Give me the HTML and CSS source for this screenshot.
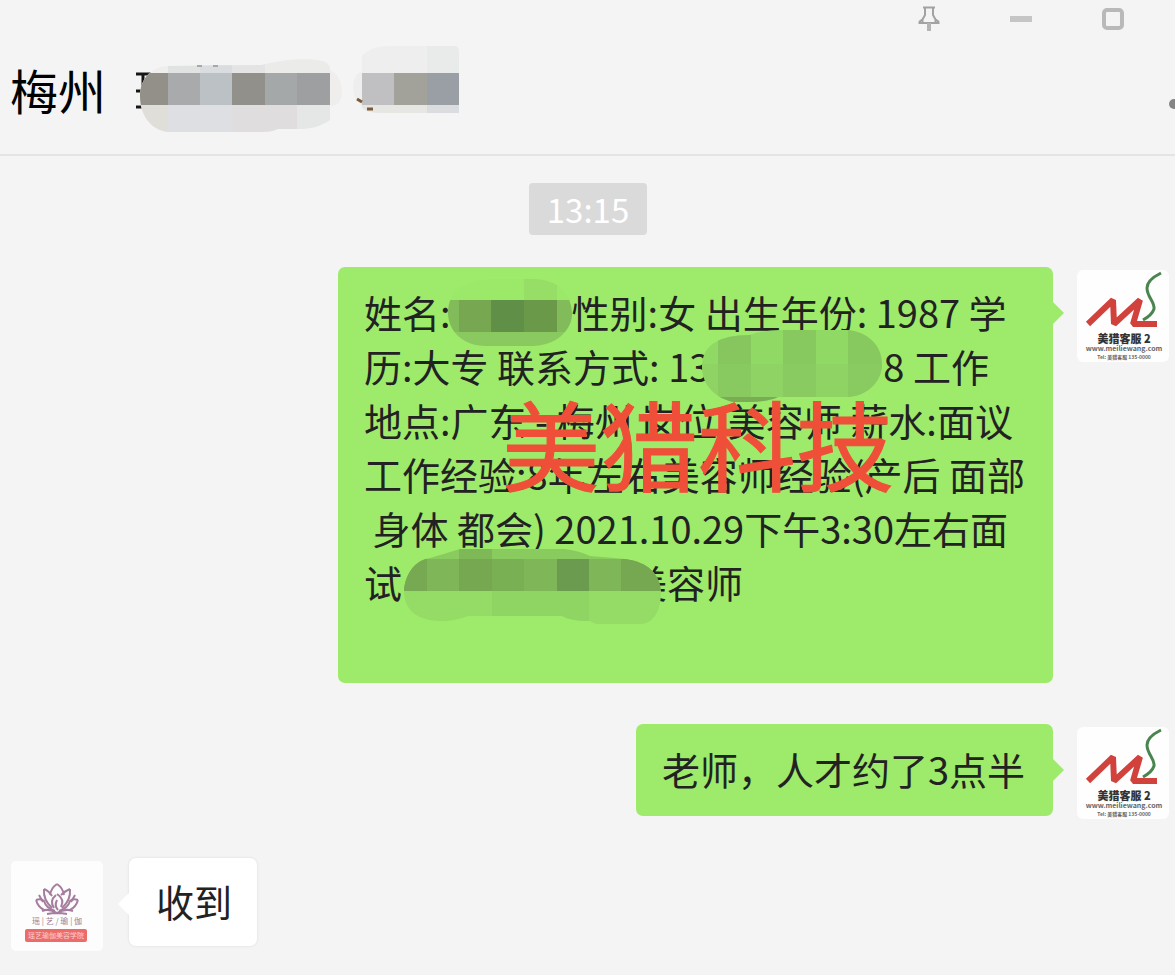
FILE: index.html
```
<!DOCTYPE html>
<html lang="zh-CN">
<head>
    <meta charset="UTF-8">
    <meta name="viewport" content="width=device-width, initial-scale=1.0">
    <title>梅州</title>
    <link rel="stylesheet" href="styles.css">
</head>
<body>
    <header class="chat-header">
        <div class="window-controls">
            <button type="button" aria-label="置顶">
                <svg width="24" height="28" viewBox="0 0 24 28" fill="none" stroke="#a2a2a2" stroke-width="2">
                    <path d="M6 2.500H18M8 3V10L5.500 14.500V17M16 3V10L18.500 14.500V17M1.500 18H22.500M2 17L6 14M22 17L18 14" />
                    <path d="M12 18V26" stroke="#b4b4b4" stroke-width="4" />
                </svg>
            </button>
            <button type="button" aria-label="最小化">
                <svg width="24" height="28" viewBox="0 0 24 28"><path d="M1 14H23" stroke="#c5c5c5" stroke-width="6" /></svg>
            </button>
            <button type="button" aria-label="最大化">
                <svg width="24" height="28" viewBox="0 0 24 28"><rect x="3" y="5" width="18" height="18" rx="3" fill="none" stroke="#b9b9b9" stroke-width="4" /></svg>
            </button>
        </div>
        <div class="title-row">
            <h1>梅州</h1>
            <svg class="title-mask" width="330" height="94" viewBox="134 44 330 94">
                <defs>
                    <clipPath id="nameClip"><path d="M140 96C140 80 150 68 166 66L262 65C280 60 305 58 322 61Q330 63 330 70Q342 76 342 94Q341 106 330 106V120C320 127 310 129 298 129H278Q272 132 262 132H168C150 130 140 114 140 96Z" /></clipPath>
                    <clipPath id="groupClip"><path d="M362 56Q370 46 390 46H454Q459 46 459 52V113H378Q362 112 360 104Q353 98 353 87Q354 73 362 72Z" /></clipPath>
                </defs>
                <path d="M136 74H154M136 91H143M136 107H143M143 75V107" stroke="#161616" stroke-width="3" />
                <g clip-path="url(#nameClip)">
                    <rect x="140" y="55" width="204" height="80" fill="#efeeec" />
                    <path d="M168 55H232V73H168Z" fill="#e1e2e2" />
                    <path d="M200 55H232V73H200Z" fill="#d9dde0" />
                    <path d="M232 55H265V73H232Z" fill="#e4e4e4" />
                    <path d="M265 55H330V73H265Z" fill="#ebebea" />
                    <path d="M140 105H168V135H140Z" fill="#dfded9" />
                    <path d="M168 105H232V135H168Z" fill="#dddfe2" />
                    <path d="M232 105H297V135H232Z" fill="#dfdddd" />
                    <path d="M297 105H330V135H297Z" fill="#e5e7e6" />
                    <path d="M140 73H168V105H140Z" fill="#929089" />
                    <path d="M168 73H200V105H168Z" fill="#a9aaac" />
                    <path d="M200 73H232V105H200Z" fill="#bcc1c6" />
                    <path d="M232 73H265V105H232Z" fill="#92908b" />
                    <path d="M265 73H297V105H265Z" fill="#a5a8a8" />
                    <path d="M297 73H330V105H297Z" fill="#9d9fa1" />
                </g>
                <g clip-path="url(#groupClip)">
                    <rect x="350" y="44" width="112" height="72" fill="#efeeee" />
                    <path d="M427 44H460V73H427Z" fill="#e9eaea" />
                    <path d="M362 105H427V115H362Z" fill="#e6e6e3" />
                    <path d="M427 105H460V115H427Z" fill="#dadcdf" />
                    <path d="M362 73H394V105H362Z" fill="#c0c0c2" />
                    <path d="M394 73H427V105H394Z" fill="#a2a19a" />
                    <path d="M427 73H459V105H427Z" fill="#999fa4" />
                </g>
                <path d="M197 66H202M213 66H218" stroke="#a9a9a4" stroke-width="2" />
                <path d="M357 99L362 102M367 109H373" stroke="#7a5a3a" stroke-width="3" />
            </svg>
            <button type="button" class="more" aria-label="更多">
                <svg width="6" height="94" viewBox="0 0 6 94"><circle cx="5" cy="60" r="5" fill="#858585" /></svg>
            </button>
        </div>
    </header>

    <main class="chat">
        <time class="chat-time">13:15</time>

        <div class="message message-own">
            <div class="bubble">
                <span class="line">姓名:<span class="mask mask-name"><svg width="124" height="68" viewBox="448 278 124 68">
                    <defs><clipPath id="maskName"><path d="M448 313C448 290 466 279 495 279H532C558 279 572 294 572 315C571 332 554 346 532 346H486C462 346 448 330 448 313Z" /></clipPath></defs>
                    <g clip-path="url(#maskName)">
                        <rect x="448" y="278" width="124" height="22" fill="#9ce869" />
                        <rect x="524" y="278" width="33" height="22" fill="#97de66" />
                        <rect x="448" y="300" width="124" height="32" fill="#82bb5a" />
                        <rect x="459" y="300" width="32" height="32" fill="#77a851" />
                        <rect x="491" y="300" width="33" height="32" fill="#608f48" />
                        <rect x="524" y="300" width="33" height="32" fill="#6b994a" />
                        <rect x="448" y="332" width="124" height="14" fill="#89c95f" />
                    </g></svg></span>性别:女 出生年份: 1987 学</span>
                <span class="line">历:大专 联系方式: 13<span class="mask mask-phone"><svg width="180" height="74" viewBox="702 329 180 74">
                    <defs><clipPath id="maskPhone"><path d="M702 366C702 346 718 335 750 335Q764 330 780 330H846C868 331 882 346 882 364C882 382 866 397 846 397H778Q768 402 748 402H734C714 398 702 384 702 366Z" /></clipPath></defs>
                    <g clip-path="url(#maskPhone)">
                        <rect x="702" y="329" width="180" height="74" fill="#91d965" />
                        <rect x="718" y="329" width="33" height="74" fill="#87c65e" />
                        <rect x="783" y="329" width="33" height="74" fill="#87c95e" />
                        <rect x="848" y="329" width="34" height="74" fill="#87c95e" />
                        <rect x="702" y="364" width="180" height="33" fill="#8bce61" fill-opacity="0.500" />
                        <rect x="702" y="397" width="80" height="6" fill="#78ad53" />
                    </g></svg></span>8 工作</span>
                <span class="line">地点:广东 - 梅州 岗位:美容师 薪水:面议</span>
                <span class="line">工作经验:8年左右美容师经验(产后 面部</span>
                <span class="line"> 身体 都会) 2021.10.29下午3:30左右面</span>
                <span class="line">试<span class="mask mask-place"><svg width="257" height="76" viewBox="404 549 257 76">
                    <defs><clipPath id="maskPlace"><path d="M404 590C406 572 416 560 430 558Q444 554 460 549H565Q580 551 590 556L625 559C648 562 660 574 661 592C661 610 654 624 640 624H596L590 621Q570 621 562 616H468Q456 621 440 621C416 620 404 610 404 590Z" /></clipPath></defs>
                    <g clip-path="url(#maskPlace)">
                        <rect x="404" y="549" width="257" height="10" fill="#8acb60" />
                        <rect x="459" y="549" width="33" height="10" fill="#7fb957" />
                        <rect x="404" y="559" width="257" height="32" fill="#7fb758" />
                        <rect x="404" y="559" width="23" height="32" fill="#76a952" />
                        <rect x="459" y="559" width="33" height="32" fill="#76a852" />
                        <rect x="492" y="559" width="32" height="32" fill="#79b054" />
                        <rect x="557" y="559" width="32" height="32" fill="#6b9b4e" />
                        <rect x="621" y="559" width="40" height="32" fill="#76a852" />
                        <rect x="404" y="591" width="257" height="34" fill="#94dc66" />
                        <rect x="492" y="591" width="97" height="34" fill="#8fd563" />
                    </g></svg></span>美容师</span>
                <span class="line"> </span>
                <span class="watermark">美猎科技</span>
            </div>
            <svg class="avatar" viewBox="0 0 92 92" role="img" aria-label="美猎客服2">
                <rect width="92" height="92" rx="6" fill="#fefefe" />
                <path d="M11 54L36 30L37 54L63 30L56 54H80" fill="none" stroke="#d2423d" stroke-width="6" stroke-linejoin="bevel" />
                <path d="M84 3Q70 10 70 18C70 27 78 32 77 39Q75 45 66 50" fill="none" stroke="#4a8550" stroke-width="3" />
                <text class="logo-name" x="47" y="73">美猎客服 2</text>
                <text class="logo-small" x="47" y="81">www.meiliewang.com</text>
                <text class="logo-tiny" x="47" y="89">Tel: 美猎客服 135-0000</text>
            </svg>
        </div>

        <div class="message message-own">
            <div class="bubble">
                <span class="line">老师，人才约了3点半</span>
            </div>
            <svg class="avatar" viewBox="0 0 92 92" role="img" aria-label="美猎客服2">
                <rect width="92" height="92" rx="6" fill="#fefefe" />
                <path d="M11 54L36 30L37 54L63 30L56 54H80" fill="none" stroke="#d2423d" stroke-width="6" stroke-linejoin="bevel" />
                <path d="M84 3Q70 10 70 18C70 27 78 32 77 39Q75 45 66 50" fill="none" stroke="#4a8550" stroke-width="3" />
                <text class="logo-name" x="47" y="73">美猎客服 2</text>
                <text class="logo-small" x="47" y="81">www.meiliewang.com</text>
                <text class="logo-tiny" x="47" y="89">Tel: 美猎客服 135-0000</text>
            </svg>
        </div>

        <div class="message message-other">
            <svg class="avatar" viewBox="0 0 92 90" role="img" aria-label="美容院">
                <rect width="92" height="90" rx="5" fill="#fdfdfd" />
                <g fill="none" stroke="#a57d9e" stroke-width="2">
                    <path d="M46 23Q40 27 39 34M46 23Q52 27 53 34M33 28Q32 39 41 47M33 28Q38 30 41 35M59 28Q60 39 51 47M59 28Q54 30 50 34" />
                    <path d="M25 39Q30 37 33 40Q35 47 44 50M25 39Q27 46 33 49M67 39Q62 37 59 40Q57 47 48 50M67 39Q65 46 59 49" />
                    <path d="M45 34Q38 40 43 47M46 33Q54 38 50 46M46 39Q43 45 47 49M31 50Q38 47 46 52Q54 47 62 50M36 53Q46 51 56 53M28 34L32 41M64 34L60 41" />
                </g>
                <text class="lotus-name" x="46" y="63">瑶 | 艺 / 瑜 | 伽</text>
                <rect x="14" y="68" width="62" height="13" rx="2" fill="#ed6b69" />
                <text class="lotus-label" x="45" y="77">瑶艺瑜伽美容学院</text>
            </svg>
            <div class="bubble">
                <span class="line">收到</span>
            </div>
        </div>
    </main>
</body>
</html>
```
FILE: styles.css
```
body {
    margin: 0;
    background-color: #f4f4f4;
    color: #222;
    font-family: "Noto Sans CJK SC", sans-serif;
    overflow-x: hidden;
}

button {
    padding: 0;
    border: none;
    background: none;
    cursor: pointer;
}

svg {
    display: block;
}

.chat-header {
    border-bottom: 2px solid #e4e4e4;
    padding-bottom: 16px;
}

.window-controls {
    display: flex;
    justify-content: flex-end;
    align-items: center;
    gap: 68px;
    height: 38px;
    padding-right: 50px;
}

.title-row {
    display: flex;
    align-items: flex-start;
    margin-top: 6px;
    padding-left: 10px;
}

.title-row h1 {
    margin: 0;
    color: #000;
    font-size: 48px;
    font-weight: 400;
    line-height: 90px;
}

.title-mask {
    margin-left: 28px;
}

.more {
    margin-left: auto;
}

.chat {
    display: flex;
    flex-direction: column;
    gap: 41px;
    padding: 27px 6px 24px 11px;
}

.chat-time {
    align-self: center;
    margin-right: 4px;
    margin-bottom: -9px;
    padding: 0 18px;
    border-radius: 4px;
    background-color: #dadada;
    color: #fff;
    font-size: 33px;
    line-height: 52px;
}

.message {
    display: flex;
    align-items: flex-start;
    gap: 24px;
}

.message-own {
    justify-content: flex-end;
}

.message-other {
    gap: 26px;
    margin-top: -2px;
}

.avatar {
    flex: none;
    width: 92px;
    margin-top: 3px;
}

.bubble {
    position: relative;
    padding: 18px 28px 20px 26px;
    border-radius: 7px;
    background-color: #9eea6a;
    font-size: 38px;
    line-height: 54px;
}

    .bubble::after {
        content: "";
        position: absolute;
        top: 35px;
        left: 100%;
        border: 11px solid transparent;
        border-left-color: #9eea6a;
        border-right-width: 0;
    }

.message-other .bubble {
    padding: 16px 25px 18px 27px;
    background-color: #fff;
    box-shadow: 0 0 3px rgba(0, 0, 0, 0.1);
}

    .message-other .bubble::after {
        left: auto;
        right: 100%;
        border-width: 11px 11px 11px 0;
        border-right-color: #fff;
    }

.line {
    display: block;
    height: 54px;
    white-space: pre;
}

.mask {
    display: inline-block;
    position: relative;
    height: 54px;
    vertical-align: top;
}

    .mask svg {
        position: absolute;
    }

.mask-name {
    width: 121px;
}

    .mask-name svg {
        top: -7px;
        left: -3px;
    }

.mask-phone {
    width: 173px;
}

    .mask-phone svg {
        top: -10px;
        left: -8px;
    }

.mask-place {
    width: 227px;
}

    .mask-place svg {
        top: -6px;
        left: 2px;
    }

.watermark {
    position: absolute;
    top: 125px;
    left: 164px;
    color: #ef4f38;
    font-size: 98px;
    line-height: 98px;
    white-space: nowrap;
    -webkit-text-stroke: 1px #ef4f38;
}

.avatar text {
    text-anchor: middle;
}

.logo-name {
    fill: #333;
    font-size: 11px;
    font-weight: 900;
}

.logo-small {
    fill: #666;
    font-size: 7px;
    font-weight: 700;
}

.logo-tiny {
    fill: #666;
    font-size: 5px;
    font-weight: 700;
}

.lotus-name {
    fill: #9b7f96;
    font-size: 8px;
}

.lotus-label {
    fill: #fbd0cf;
    font-size: 7px;
}
```
